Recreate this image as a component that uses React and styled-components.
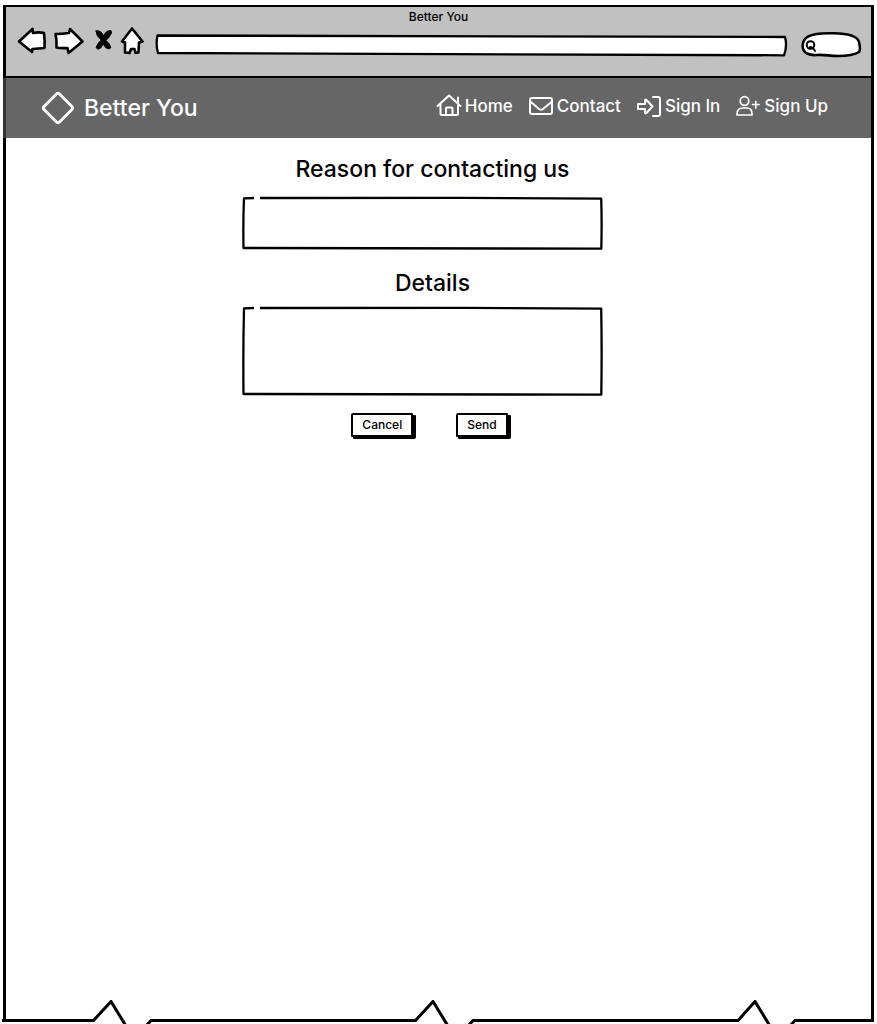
import React from "react";
import styled, { createGlobalStyle } from "styled-components";

const GlobalStyle = createGlobalStyle`
  * { box-sizing: border-box; }
  body {
    margin: 0;
    background: #fff;
    color: #000;
    font-family: Inter, "Liberation Sans", Arial, sans-serif;
    font-weight: 500;
  }
`;

const Page = styled.div`
  display: flex;
  flex-direction: column;
  min-height: 100vh;
  padding-top: 5px;
`;

const Window = styled.div`
  flex: 1;
  display: flex;
  flex-direction: column;
  margin: 0 3px;
  border: 3px solid #000;
  border-width: 2px 3px 0;
`;

const Chrome = styled.header`
  padding: 0 9px 19px 11px;
  background: #c1c1c1;
  border-bottom: 2px solid #000;
`;

const WindowTitle = styled.div`
  padding-right: 2px;
  font-size: 12px;
  line-height: 20px;
  text-align: center;
`;

const Toolbar = styled.div`
  display: flex;
  align-items: center;
  gap: 10px;
`;

const ToolGroup = styled.div`
  display: flex;
  gap: 6px;
`;

const ToolButton = styled.button`
  width: ${(p) => p.$width}px;
  height: 30px;
  padding: 0;
  border: 0;
  background: none;
  cursor: pointer;
`;

const Drawing = styled.svg`
  display: block;
  width: 100%;
  height: 100%;
  overflow: visible;
  fill: #fff;
  stroke: #000;
  stroke-width: 2.6;
  stroke-linejoin: round;
  stroke-linecap: round;
`;

const Sketched = styled.div`
  position: relative;
  height: ${(p) => p.$height}px;
  flex: ${(p) => (p.$width ? "none" : "1 1 auto")};
  width: ${(p) => (p.$width ? `${p.$width}px` : "auto")};
`;

const Outline = styled(Drawing)`
  position: absolute;
  inset: 0;
  pointer-events: none;
`;

const TextBox = styled.input`
  position: relative;
  display: block;
  width: 100%;
  height: 100%;
  padding: 4px 12px;
  padding-left: ${(p) => p.$inset || 12}px;
  border: 0;
  outline: 0;
  resize: none;
  background: transparent;
  font: 16px/20px Inter, "Liberation Sans", Arial, sans-serif;
`;

const SiteBar = styled.div`
  display: flex;
  align-items: center;
  justify-content: space-between;
  height: 60px;
  margin-left: -3px;
  padding: 0 43px 0 36px;
  border-left: 3px solid #333;
  background: #666;
  color: #fff;
`;

const Brand = styled.a`
  display: flex;
  align-items: center;
  gap: 10px;
  color: inherit;
  font-size: 23px;
  line-height: 32px;
  text-decoration: none;
`;

const Links = styled.nav`
  display: flex;
  gap: 16px;
`;

const NavLink = styled.a`
  display: flex;
  align-items: center;
  gap: 4px;
  padding-bottom: 5px;
  color: inherit;
  font-size: 17px;
  line-height: 24px;
  text-decoration: none;
`;

const Glyph = styled.svg`
  display: block;
  width: ${(p) => p.$size}px;
  height: ${(p) => p.$size}px;
  overflow: visible;
  fill: none;
  stroke: currentColor;
  stroke-width: 2;
  stroke-linejoin: round;
  stroke-linecap: round;
`;

const Main = styled.main`
  flex: 1;
  display: flex;
  justify-content: center;
  padding: 17px 32px 0 0;
`;

const Form = styled.form`
  width: 100%;
  max-width: 361px;
`;

const Field = styled.div`
  display: flex;
  flex-direction: column;
  gap: ${(p) => p.$gap}px;
  margin-bottom: ${(p) => p.$after}px;
`;

const Label = styled.label`
  padding-left: 20px;
  font-size: 23px;
  line-height: 28px;
  text-align: center;
`;

const Actions = styled.div`
  display: flex;
  justify-content: center;
  gap: 43px;
  padding-left: 14px;
`;

const Button = styled.button`
  height: 24px;
  padding: 0 9px;
  border: 2px solid #000;
  border-radius: 2px 1px;
  background: #fff;
  box-shadow: 2px 2px 0 #000, 3px 2px 0 #000;
  color: #000;
  font: 500 12px/20px Inter, "Liberation Sans", Arial, sans-serif;
  cursor: pointer;
`;

const TornEdge = styled.svg`
  display: block;
  flex: none;
  width: 100%;
  height: 24px;
  fill: none;
  stroke: #000;
  stroke-width: 3;
`;

const tools = [
  { name: "Back", width: 30, icon: <path d="M2 14.5L15.5 2L16 6Q22 4.8 27 6Q28 14 27.5 21L15.5 22L15 25Z" /> },
  { name: "Forward", width: 32, icon: <path d="M2.5 7Q9 7 16 6L17 2L29.5 14.5L15.5 26L14.5 21Q8 21.5 3.5 20.5Q4 13 2.5 7Z" /> },
  {
    name: "Stop",
    width: 24,
    icon: (
      <path
        fill="#000"
        strokeWidth="1"
        d="M5 4Q10 2.500 12.800 9Q15 3 20 3.500L20.500 6Q18 11 15 13.500Q18.500 16 20 20.500L18 22Q14.500 22 12.300 17Q10 22 7 22.300L5 20.500Q6.500 16 10.300 13Q5 9 5 4Z"
      />
    ),
  },
  { name: "Home", width: 24, icon: <path d="M11 1.5L21.5 14.5L18 15.5L17.5 25.5L14.5 26L13.5 22L10 22L8.5 26L4 25.5L4 15.5L1 14.5Z" /> },
];

const links = [
  {
    text: "Home",
    icon: <path d="M0.5 12L12 1.5L23.5 12M3.5 10V19.5Q3.5 21 5 21H19.5Q21 21 21 19.5V3.5M9 21V14.5Q9 13.5 10 13.5H14.5Q15.5 13.5 15.5 14.5V21" />,
  },
  {
    text: "Contact",
    icon: <path d="M3 4H21Q23 4 23 6V18Q23 20 21 20H3Q1 20 1 18V6Q1 4 3 4ZM2 8L10 15Q12 16.5 14 15L22.5 8" />,
  },
  {
    text: "Sign In",
    icon: <path d="M1 10H8V6.5Q8 5 9.5 6L15.5 12.5L9.5 19Q8 20 8 18.5V15H1ZM16 3H21Q23 3 23 5V20Q23 22 21 22H16" />,
  },
  {
    text: "Sign Up",
    icon: (
      <g strokeWidth="1.7">
        <circle cx="8.5" cy="7" r="4.3" />
        <path d="M1 21V20Q1 14 7 14H11Q16 14 16 20V21ZM16.500 10.500H23M19.800 7.500V14" />
      </g>
    ),
  },
];

function FieldOutline({ height }) {
  const b = height - 2;
  return (
    <Outline viewBox={`0 0 361 ${height}`} preserveAspectRatio="none" aria-hidden="true">
      <path
        fill="none"
        strokeWidth="2.3"
        d={`M18 2L220 1.8L359.2 2.6Q360 ${b / 2} 359.3 ${b + 0.7}Q200 ${b + 0.8} 1.5 ${b}Q1 ${b / 2} 2 2.3L12 2`}
        strokeLinecap="butt"
      />
    </Outline>
  );
}

export default function App() {
  return (
    <>
      <GlobalStyle />
      <Page>
        <Window>
          <Chrome>
            <WindowTitle>Better You</WindowTitle>
            <Toolbar>
              <ToolGroup>
                {tools.map((t) => (
                  <ToolButton key={t.name} type="button" aria-label={t.name} $width={t.width}>
                    <Drawing viewBox={`0 0 ${t.width} 30`}>{t.icon}</Drawing>
                  </ToolButton>
                ))}
              </ToolGroup>
              <Sketched $height={30}>
                <Outline viewBox="0 0 635 30" preserveAspectRatio="none" aria-hidden="true">
                  <path strokeWidth="2.3" d="M2.5 8.5Q300 8 630 10Q632.5 19 629 28.3Q300 26.5 3 26Q0.5 17 2.5 8.5Z" />
                </Outline>
                <TextBox type="text" aria-label="Address" />
              </Sketched>
              <Sketched $height={30} $width={62}>
                <Outline viewBox="0 0 62 30" aria-hidden="true">
                  <path d="M7 26.5C1 23 1 14 8 9.5C16 5.5 26 6 34 6.3C45 6.5 57 8 59 15C60 19 60.5 23 59 25C55 27.5 46 29 38 29C30 29 24 27.5 17 28Q11 28.5 7 26.5Z" />
                  <g strokeWidth="2">
                    <circle cx="10.5" cy="18" r="3.8" />
                    <path d="M10 20L13 21L15 24" fill="none" />
                  </g>
                </Outline>
                <TextBox type="search" aria-label="Search" $inset={18} />
              </Sketched>
            </Toolbar>
          </Chrome>
          <SiteBar>
            <Brand href="#home">
              <Glyph $size={32} viewBox="0 0 32 32" aria-hidden="true">
                <path strokeWidth="2.8" d="M14.5 2Q16 0.5 17.5 2L30 14.5Q31.5 16 30 17.5L17.5 30Q16 31.5 14.5 30L2 17.5Q0.5 16 2 14.5Z" />
              </Glyph>
              Better You
            </Brand>
            <Links>
              {links.map((l) => (
                <NavLink key={l.text} href={`#${l.text.toLowerCase().replace(" ", "-")}`}>
                  <Glyph $size={24} viewBox="0 0 24 24" aria-hidden="true">{l.icon}</Glyph>
                  {l.text}
                </NavLink>
              ))}
            </Links>
          </SiteBar>
          <Main>
            <Form onSubmit={(e) => e.preventDefault()}>
              <Field $gap={13} $after={19}>
                <Label htmlFor="reason">Reason for contacting us</Label>
                <Sketched $height={54}>
                  <FieldOutline height={54} />
                  <TextBox id="reason" type="text" />
                </Sketched>
              </Field>
              <Field $gap={9} $after={17}>
                <Label htmlFor="details">Details</Label>
                <Sketched $height={90}>
                  <FieldOutline height={90} />
                  <TextBox as="textarea" id="details" />
                </Sketched>
              </Field>
              <Actions>
                <Button type="button">Cancel</Button>
                <Button type="submit">Send</Button>
              </Actions>
            </Form>
          </Main>
        </Window>
        <TornEdge viewBox="0 0 877 24" preserveAspectRatio="none" aria-hidden="true">
          <path d="M4.5 0V20.5M872.5 0V20.5M2 20.5H93.5L111 1.5L126 26M146 26L151 20.5H415.5L433 1.5L448 26M468 26L473 20.5H738L755 1.5L770 26M790 26L795 20.5H874" />
        </TornEdge>
      </Page>
    </>
  );
}
